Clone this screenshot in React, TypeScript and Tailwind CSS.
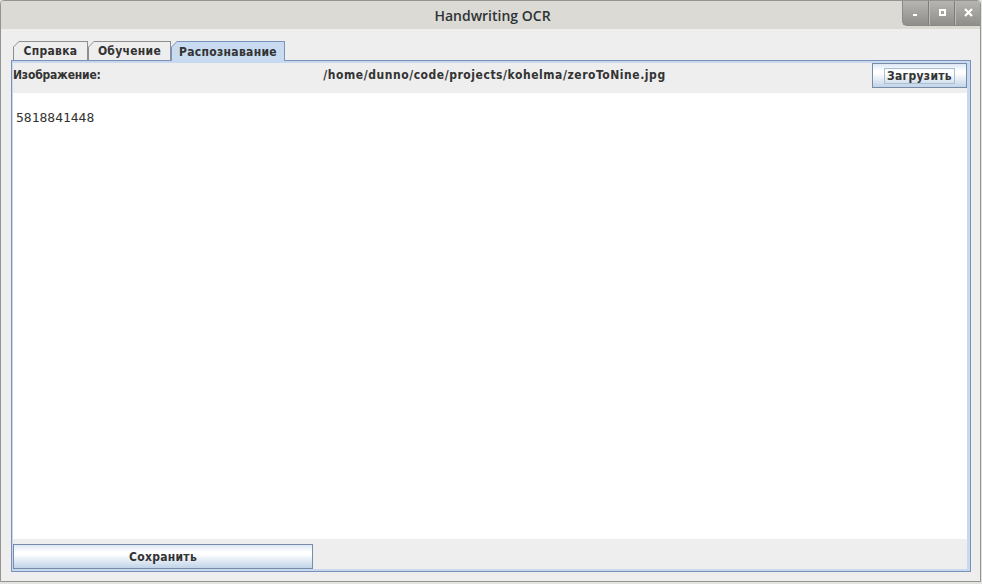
const tabs = [
  { label: "Справка", w: "w-[75px]", active: false },
  { label: "Обучение", w: "w-[83px]", active: false },
  { label: "Распознавание", w: "w-[114px]", active: true },
];

const bold = "font-['DejaVu_Sans_Condensed','DejaVu_Sans',sans-serif] font-bold text-[12px] text-[#333]";

function Tab({ label, w, active }: { label: string; w: string; active: boolean }) {
  return (
    <div
      className={`relative ${w} ${active ? "h-[20px] z-10 bg-[#7d92bb]" : "h-[19px] bg-[#8e8e8e]"} px-px pt-px [clip-path:polygon(0_6px,6px_0,100%_0,100%_100%,0_100%)]`}
    >
      <div
        className={`h-full flex items-center justify-center tracking-[0.3px] ${bold} ${active ? "bg-[#c8dbf0]" : "bg-[#eeeeee]"} [clip-path:polygon(0_5px,5px_0,100%_0,100%_100%,0_100%)]`}
      >
        {label}
      </div>
    </div>
  );
}

function WindowControls() {
  return (
    <div className="flex h-[25px] w-[78px] self-start rounded-bl-[5px] overflow-hidden border-l border-b border-[#8a8985] bg-[linear-gradient(to_bottom,#b6b5b1,#8f8e8a)]">
      <div className="w-[26px] relative border-r border-[#7f7e7a]">
        <div className="absolute left-[10px] top-[13px] w-[4px] h-[2px] bg-white" />
      </div>
      <div className="w-[26px] relative border-l border-[#bcbbb7] border-r border-r-[#7f7e7a] flex items-center justify-center">
        <div className="w-[7px] h-[7px] border-2 border-white -mt-[1px]" />
      </div>
      <div className="flex-1 border-l border-[#bcbbb7] flex items-center justify-center">
        <svg width="9" height="9" viewBox="0 0 9 9" className="-mt-[1px]">
          <path d="M1 1L8 8M8 1L1 8" stroke="white" strokeWidth="2.2" />
        </svg>
      </div>
    </div>
  );
}

const btn =
  "border border-[#7a8aa9] bg-[linear-gradient(to_bottom,#dde8f3_0%,#ffffff_30%,#ffffff_40%,#c1d4e8_100%)] flex items-center justify-center";

export default function App() {
  return (
    <div className="w-[982px] h-[584px] bg-[#e3e3e1] font-['DejaVu_Sans',sans-serif]">
      <div className="w-[981px] h-[582px] border border-[#94938f] rounded-t-[4px] bg-[#eeeeee] flex flex-col overflow-hidden">
        {/* title bar */}
        <div className="h-[28px] bg-[#dcdad5] flex">
          <div className="w-[78px]" />
          <div className="flex-1 flex items-center justify-center pl-[4px] font-['Open_Sans',sans-serif] font-semibold text-[14px] text-[#2e3436]">
            Handwriting OCR
          </div>
          <WindowControls />
        </div>

        <div className="flex-1 pt-[12px] pl-[10px] pr-[9px] pb-[9px] flex flex-col">
          <div className="flex items-start h-[19px] pl-[2px]">
            {tabs.map(t => (
              <Tab key={t.label} label={t.label} w={t.w} active={t.active} />
            ))}
          </div>

          <div className="h-[512px] border border-[#7c90b8] flex flex-col">
            <div className="flex-1 flex flex-col border-t-2 border-b-2 border-l border-r-[3px] border-[#c6d9ef]">
              <div className={`h-[30px] flex items-start ${bold}`}>
                <div className="w-[88px] h-[25px] leading-[25px] whitespace-nowrap tracking-[-0.2px]">Изображение:</div>
                <div className="flex-1 h-[25px] leading-[25px] text-center pl-[16px] whitespace-nowrap tracking-[0.55px]">
                  /home/dunno/code/projects/kohelma/zeroToNine.jpg
                </div>
                <button className={`w-[95px] h-[25px] ${btn}`}>
                  <span className="border border-[#a9bdd3] px-[2px] h-[16px] leading-[14px] tracking-[0.3px]">Загрузить</span>
                </button>
              </div>

              <div className="h-[446px] bg-white pt-[17px] pl-[3px] font-['DejaVu_Sans_Mono',monospace] text-[13px] leading-[15px] text-[#333]">
                5818841448
              </div>

              <div className="flex-1 pt-[5px]">
                <button className={`w-[300px] h-[25px] tracking-[0.3px] ${btn} ${bold}`}>
                  Сохранить
                </button>
              </div>
            </div>
          </div>
        </div>
      </div>
    </div>
  );
}
